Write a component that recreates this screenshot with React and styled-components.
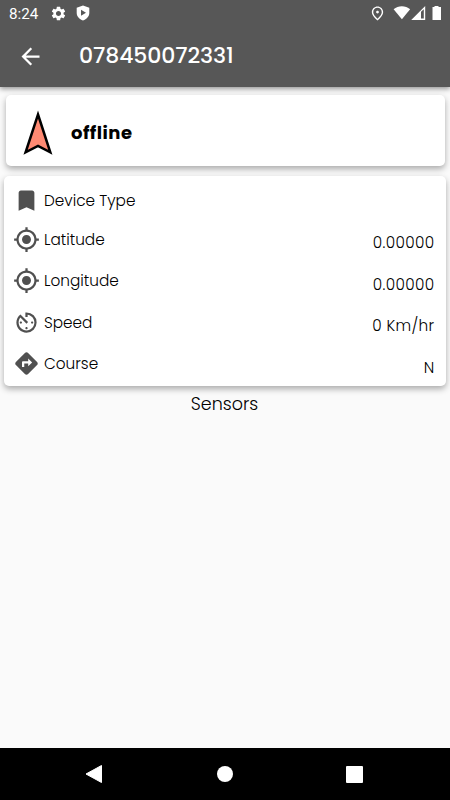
import React from 'react'
import styled, { createGlobalStyle } from 'styled-components'
import {
  MdArrowBack,
  MdAvTimer,
  MdBookmark,
  MdDirections,
  MdMyLocation,
  MdOutlinePlace,
  MdSettings
} from 'react-icons/md'

const GlobalStyle = createGlobalStyle`
  * {
    box-sizing: border-box;
  }
  body {
    margin: 0;
    background: #fafafa;
  }
`

const Screen = styled.div`
  display: flex;
  flex-direction: column;
  width: 450px;
  height: 800px;
  overflow: hidden;
  background: #fafafa;
  color: #111111;
  font-family: Poppins, Inter, sans-serif;
`

const Header = styled.header`
  flex: none;
  height: 87px;
  background: #575757;
  color: #ffffff;
  box-shadow: 0 2px 5px rgba(0, 0, 0, 0.4);
`

const StatusBar = styled.div`
  display: flex;
  align-items: center;
  height: 26px;
  padding: 0 7px 0 9px;
`

const Clock = styled.span`
  width: 41px;
  font: 400 15.2px/26px Roboto, sans-serif;
  padding-top: 2px;
`

const StatusGroup = styled.div`
  display: flex;
  align-items: center;
  gap: ${({ $gap }) => $gap}px;
  margin-left: ${({ $end }) => ($end ? 'auto' : '0')};
  & > svg {
    flex: none;
  }
`

const AppBar = styled.div`
  display: flex;
  align-items: center;
  height: 61px;
  padding: 0 0 0 17px;
`

const Title = styled.h1`
  margin: -2px 0 0 35px;
  font-size: 22px;
  line-height: 32px;
  font-weight: 500;
  letter-spacing: -0.1px;
`

const Content = styled.main`
  flex: 1;
  padding: 8px 4px 0;
`

const Card = styled.section`
  background: #ffffff;
  border-radius: 5px;
  box-shadow: 0 3px 6px rgba(0, 0, 0, 0.32);
`

const StateCard = styled(Card)`
  display: flex;
  align-items: center;
  height: 71px;
  margin: 0 1.5px 10px;
  padding: 4px 0 0 17.5px;
`

const State = styled.strong`
  margin: 0 0 0 18px;
  font-size: 18px;
  line-height: 26px;
  font-weight: 700;
  letter-spacing: 0.45px;
  color: #000000;
`

const DetailCard = styled(Card)`
  height: 210px;
  padding: 6px 11.5px 0 9px;
`

const Row = styled.div`
  display: flex;
  align-items: center;
  height: ${({ $height }) => $height || 41.5}px;
  color: #505050;
  & > svg {
    margin-top: -1px;
  }
`

const Label = styled.span`
  margin-left: 4px;
  font-size: 15.3px;
  line-height: 24px;
  font-weight: 300;
  color: #000000;
`

const Value = styled.span`
  margin: 7px 0 0 auto;
  font-size: 15.3px;
  line-height: 24px;
  font-weight: 300;
  letter-spacing: 0.35px;
  color: #000000;
`

const Sensors = styled.h2`
  margin: 5px 1px 0 0;
  text-align: center;
  font-size: 17.5px;
  line-height: 26px;
  font-weight: 300;
  color: #000000;
`

const NavBar = styled.nav`
  display: flex;
  align-items: center;
  justify-content: space-between;
  flex: none;
  height: 52px;
  padding: 0 87px 0 85px;
  background: #000000;
`

const ShieldIcon = () => (
  <svg width="14" height="16" viewBox="0 0 14 16">
    <path
      fill="#fff"
      fillRule="evenodd"
      d="M7 .5 13.3 2.8v5.1c0 3.5-2.7 6.3-6.3 7.5C3.4 14.2.7 11.4.7 7.9V2.8ZM5 4.7v6L10 7.7Z"
    />
  </svg>
)

const SignalIcons = () => (
  <svg width="50" height="16" viewBox="0 0 50 16" fill="#fff">
    <path d="M.6 4.2C5.2.3 12.5.3 17.1 4.2L8.9 14.3Z" />
    <path fillRule="evenodd" d="M32.2 1v14H18.2ZM28 6.8v6.6h2.8V4.2Z" />
    <path d="M41.5 1h4v1H48v13h-8.5V2h2Z" />
  </svg>
)

const Arrow = () => (
  <svg width="30" height="46" viewBox="0 0 30 46">
    <path d="M15 4.5 27.3 42.3 15 36 2.6 42.3Z" fill="#ff8a73" stroke="#000" strokeWidth="2.5" />
  </svg>
)

const rows = [
  { icon: MdBookmark, label: 'Device Type', height: 37 },
  { icon: MdMyLocation, label: 'Latitude', value: '0.00000' },
  { icon: MdMyLocation, label: 'Longitude', value: '0.00000' },
  { icon: MdAvTimer, label: 'Speed', value: '0 Km/hr' },
  { icon: MdDirections, label: 'Course', value: 'N' }
]

const App = () => {
  return <Screen>
    <GlobalStyle />
    <Header>
      <StatusBar>
        <Clock>8:24</Clock>
        <StatusGroup $gap={9}>
          <MdSettings size={17} />
          <ShieldIcon />
        </StatusGroup>
        <StatusGroup $gap={7} $end>
          <MdOutlinePlace size={17} />
          <SignalIcons />
        </StatusGroup>
      </StatusBar>
      <AppBar>
        <MdArrowBack size={27} />
        <Title>078450072331</Title>
      </AppBar>
    </Header>
    <Content>
      <StateCard>
        <Arrow />
        <State>offline</State>
      </StateCard>
      <DetailCard>
        {rows.map(({ icon: Icon, label, value, height }) => (
          <Row key={label} $height={height}>
            <Icon size={27} />
            <Label>{label}</Label>
            {value && <Value>{value}</Value>}
          </Row>
        ))}
      </DetailCard>
      <Sensors>Sensors</Sensors>
    </Content>
    <NavBar>
      <svg width="18" height="20" viewBox="0 0 18 20">
        <path d="M16.5 1.5v17L1 10Z" fill="#fff" stroke="#fff" strokeLinejoin="round" />
      </svg>
      <svg width="16" height="16" viewBox="0 0 16 16">
        <circle cx="8" cy="8" r="8" fill="#fff" />
      </svg>
      <svg width="17" height="17" viewBox="0 0 17 17">
        <rect width="17" height="17" rx="1" fill="#fff" />
      </svg>
    </NavBar>
  </Screen>
}

export default App
